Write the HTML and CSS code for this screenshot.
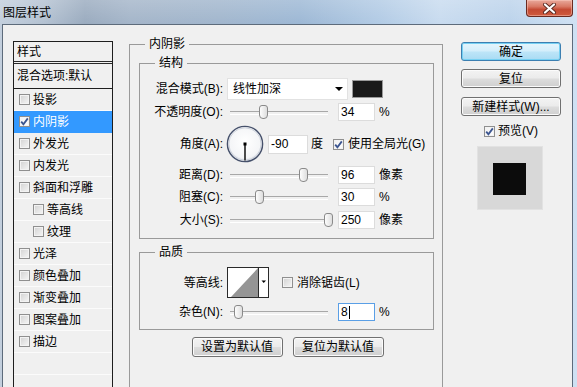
FILE: index.html
```html
<!DOCTYPE html>
<html lang="zh">
<head>
  <meta charset="UTF-8" />
  <title>图层样式</title>
  <link rel="stylesheet" href="styles.css">
</head>
<body>
  <div class="window">
    <div class="titlebar">
      <span class="title">图层样式</span>
      <button class="close-btn">
        <svg width="15" height="11" viewBox="0 0 15 11">
          <path d="M3 1.5 L12 9.5 M12 1.5 L3 9.5" stroke="#5a2a22" stroke-width="4" stroke-linecap="round"/>
          <path d="M3 1.5 L12 9.5 M12 1.5 L3 9.5" stroke="#fff" stroke-width="2.2" stroke-linecap="round"/>
        </svg>
      </button>
    </div>

    <div class="dialog">
      <ul class="style-list">
        <li class="list-head">样式</li>
        <li class="list-blend">混合选项:默认</li>
        <li><span class="check"></span>投影</li>
        <li class="selected"><span class="check checked"><svg width="9" height="9" viewBox="0 0 9 9"><path d="M1.2 4.6 L3.4 7.2 L7.8 1.4" fill="none" stroke="#3b5590" stroke-width="1.8"/></svg></span>内阴影</li>
        <li><span class="check"></span>外发光</li>
        <li><span class="check"></span>内发光</li>
        <li><span class="check"></span>斜面和浮雕</li>
        <li class="sub"><span class="check"></span>等高线</li>
        <li class="sub"><span class="check"></span>纹理</li>
        <li><span class="check"></span>光泽</li>
        <li><span class="check"></span>颜色叠加</li>
        <li><span class="check"></span>渐变叠加</li>
        <li><span class="check"></span>图案叠加</li>
        <li><span class="check"></span>描边</li>
        <li></li>
      </ul>

      <fieldset class="group outer">
        <legend>内阴影</legend>
        <div class="outer-body">
          <fieldset class="group">
            <legend>结构</legend>
            <div class="group-body structure">
              <div class="row h22">
                <span class="lbl">混合模式(B):</span>
                <div class="select">线性加深<span class="arrow"></span></div>
                <div class="swatch"></div>
              </div>
              <div class="row h24">
                <span class="lbl">不透明度(O):</span>
                <div class="slider"><div class="track"><span class="thumb" style="left: 34%"></span></div></div>
                <div class="field">34</div>
                <span class="unit">%</span>
              </div>
              <div class="row h40">
                <span class="lbl">角度(A):</span>
                <svg class="dial" width="38" height="38" viewBox="0 0 38 38">
                  <defs>
                    <radialGradient id="dialFill" cx="50%" cy="45%" r="55%">
                      <stop offset="0" stop-color="#ffffff"/>
                      <stop offset="0.8" stop-color="#f4f5f7"/>
                      <stop offset="1" stop-color="#d9dce3"/>
                    </radialGradient>
                  </defs>
                  <circle cx="19" cy="19" r="17.6" fill="url(#dialFill)" stroke="#46516b" stroke-width="1.4"/>
                  <circle cx="19" cy="19" r="16.2" fill="none" stroke="#c4cad6" stroke-width="0.8"/>
                  <line x1="19" y1="19" x2="19" y2="35.5" stroke="#000" stroke-width="1.4"/>
                  <rect x="17.5" y="17.5" width="3" height="3" fill="#000"/>
                </svg>
                <div class="field angle">-90</div>
                <span class="unit deg">度</span>
                <span class="check checked global"><svg width="9" height="9" viewBox="0 0 9 9"><path d="M1.2 4.6 L3.4 7.2 L7.8 1.4" fill="none" stroke="#3b5590" stroke-width="1.8"/></svg></span>
                <span class="check-text">使用全局光(G)</span>
              </div>
              <div class="row h22">
                <span class="lbl">距离(D):</span>
                <div class="slider"><div class="track"><span class="thumb" style="left: 74%"></span></div></div>
                <div class="field">96</div>
                <span class="unit">像素</span>
              </div>
              <div class="row h22">
                <span class="lbl">阻塞(C):</span>
                <div class="slider"><div class="track"><span class="thumb" style="left: 30%"></span></div></div>
                <div class="field">30</div>
                <span class="unit">%</span>
              </div>
              <div class="row h24">
                <span class="lbl">大小(S):</span>
                <div class="slider"><div class="track"><span class="thumb" style="left: 100%"></span></div></div>
                <div class="field">250</div>
                <span class="unit">像素</span>
              </div>
            </div>
          </fieldset>

          <fieldset class="group quality">
            <legend>品质</legend>
            <div class="group-body quality-body">
              <div class="row h31">
                <span class="lbl">等高线:</span>
                <svg class="contour" width="42" height="31" viewBox="0 0 42 31">
                  <rect x="0.5" y="0.5" width="41" height="30" fill="#fff" stroke="#2a2a2a"/>
                  <polygon points="4,30 31,1 31,30" fill="#959595"/>
                  <line x1="31.5" y1="0" x2="31.5" y2="31" stroke="#2a2a2a"/>
                  <polygon points="34.5,13.5 39,13.5 36.75,16" fill="#000"/>
                </svg>
                <span class="check antialias"></span>
                <span class="check-text">消除锯齿(L)</span>
              </div>
              <div class="row h22 noise">
                <span class="lbl">杂色(N):</span>
                <div class="slider"><div class="track"><span class="thumb" style="left: 8%"></span></div></div>
                <div class="field focused">8<span class="caret"></span></div>
                <span class="unit">%</span>
              </div>
            </div>
          </fieldset>

          <div class="default-buttons">
            <button class="btn wide">设置为默认值</button>
            <button class="btn wide">复位为默认值</button>
          </div>
        </div>
      </fieldset>

      <div class="side">
        <button class="btn primary">确定</button>
        <button class="btn">复位</button>
        <button class="btn">新建样式(W)...</button>
        <div class="preview-toggle">
          <span class="check checked"><svg width="9" height="9" viewBox="0 0 9 9"><path d="M1.2 4.6 L3.4 7.2 L7.8 1.4" fill="none" stroke="#3b5590" stroke-width="1.8"/></svg></span>
          <span>预览(V)</span>
        </div>
        <div class="preview-box">
          <div class="preview-square"></div>
        </div>
      </div>
    </div>
  </div>
</body>
</html>
```

FILE: styles.css
```css
* {
  box-sizing: border-box;
}

body {
  margin: 0;
  font-family: "Liberation Sans", "Noto Sans CJK SC", sans-serif;
  font-size: 12px;
  line-height: 16px;
  color: #000;
}

.window {
  width: 577px;
  height: 387px;
  overflow: hidden;
  background:
    linear-gradient(180deg, rgba(255,255,255,0.18), rgba(255,255,255,0) 24px),
    linear-gradient(90deg, #c3cfdd 0px, #b3c1d1 45px, #9aabbf 85px, #a4b5c9 130px, #a1b6cd 220px, #9db8d5 300px, #b2cbe5 380px, #c8dbef 440px, #bcd3eb 510px, #cfe1f3 577px);
}

/* 標題列 */
.titlebar {
  height: 24px;
  display: flex;
  align-items: flex-start;
}

.title {
  padding: 5px 0 0 3px;
  font-size: 12px;
}

.close-btn {
  margin-left: auto;
  margin-right: 4px;
  width: 47px;
  height: 17px;
  padding: 0;
  border: 1px solid #6a2a20;
  border-top: none;
  border-radius: 0 0 4px 4px;
  background: linear-gradient(180deg, #e9a99b 0%, #d97a66 40%, #c44a33 60%, #cf5b3e 100%);
  box-shadow: inset 0 0 0 1px rgba(255,210,200,0.45);
  display: flex;
  align-items: center;
  justify-content: center;
}

/* 對話框 */
.dialog {
  margin-left: 2px;
  width: 571px;
  height: 380px;
  border: 1px solid #5d6b7b;
  border-bottom: none;
  background: #f0f0f0;
  display: flex;
  align-items: flex-start;
  overflow: hidden;
}

.style-list {
  list-style: none;
  margin: 16px 0 0 10px;
  padding: 0;
  width: 100px;
  height: 360px;
  border: 1px solid #1e1e1e;
  border-bottom: none;
}

.style-list li {
  height: 22px;
  border-bottom: 1px solid #fbfbfb;
  display: flex;
  align-items: center;
  padding-left: 5px;
}

.style-list .list-head {
  height: 22px;
  padding-left: 3px;
  border-bottom: 3px double #2a2a2a;
}

.style-list .list-blend {
  height: 25px;
  padding-left: 3px;
  border-bottom: 1px solid #1e1e1e;
}

.style-list .check {
  margin-right: 3px;
}

.style-list .sub {
  padding-left: 19px;
}

.style-list .selected {
  background: #3399ff;
  color: #fff;
  border-bottom-color: #3399ff;
}

.check {
  flex: none;
  width: 11px;
  height: 11px;
  border: 1px solid #8f8f8f;
  background: linear-gradient(135deg, #d2d2d2, #f6f6f6);
  box-shadow: inset 0 0 0 1px #f3f3f3;
  display: inline-flex;
  align-items: center;
  justify-content: center;
}

.check.checked {
  background: linear-gradient(135deg, #f0f0f0, #ffffff);
}

/* 群組框 */
.group {
  margin: 0;
  padding: 0;
  min-inline-size: 0;
  border: 1px solid #9a9a9a;
}

.group legend {
  margin-left: 14px;
  padding: 0 3px;
  font-size: 12px;
  line-height: 16px;
}

.outer {
  margin: 11px 0 0 16px;
  width: 314px;
  height: 400px;
}

.outer legend {
  margin-left: 15px;
  padding: 0 4px;
}

.outer-body {
  padding: 3px 8px 0 9px;
}

.group-body {
  display: flex;
  flex-direction: column;
}

.structure {
  padding: 7px 0 6px;
}

.quality {
  margin-top: 5px;
}

.quality-body {
  padding: 7px 0 6px;
}

.quality-body .noise {
  margin-top: 3px;
}

.row {
  display: flex;
  align-items: center;
}

.h22 { height: 22px; }
.h24 { height: 24px; }
.h31 { height: 31px; }
.h40 { height: 40px; }

.lbl {
  width: 83px;
  text-align: right;
  flex: none;
  white-space: nowrap;
}

.select {
  margin-left: 4px;
  width: 121px;
  height: 22px;
  background: #fff;
  border: 1px solid #e2e2e2;
  padding-left: 5px;
  display: flex;
  align-items: center;
}

.arrow {
  margin-left: auto;
  margin-right: 4px;
  width: 0;
  height: 0;
  border-left: 4px solid transparent;
  border-right: 4px solid transparent;
  border-top: 4px solid #000;
}

.swatch {
  margin-left: 4px;
  width: 31px;
  height: 18px;
  background: #1a1a1a;
  border: 1px solid #9a9a9a;
}

.slider {
  margin-left: 4px;
  width: 104px;
  padding: 0 3px;
  flex: none;
}

.track {
  position: relative;
  height: 14px;
}

.track::before {
  content: "";
  position: absolute;
  left: 0;
  right: 0;
  top: 6px;
  height: 2px;
  border-top: 1px solid #a8a8a8;
  border-bottom: 1px solid #ffffff;
}

.thumb {
  position: absolute;
  top: 0;
  width: 9px;
  height: 14px;
  margin-left: -4px;
  border: 1px solid #8a8a8a;
  border-radius: 3px 3px 4px 4px;
  background: linear-gradient(90deg, #fdfdfd, #dedede);
}

.field {
  margin-left: 7px;
  width: 37px;
  height: 18px;
  background: #fff;
  border: 1px solid #dcdcdc;
  padding-left: 2px;
  display: flex;
  align-items: center;
}

.field.focused {
  border-color: #5a9fe6;
}

.caret {
  width: 1px;
  height: 13px;
  background: #000;
  margin-left: 1px;
}

.field.angle {
  margin-left: 4px;
  width: 40px;
  height: 19px;
}

.unit {
  margin-left: 4px;
}

.unit.deg {
  margin-left: 3px;
}

.dial {
  margin-left: 3px;
  flex: none;
}

.global {
  margin-left: 10px;
}

.check-text {
  margin-left: 4px;
}

.contour {
  margin-left: 4px;
  flex: none;
}

.antialias {
  margin-left: 13px;
}

.default-buttons {
  margin-top: 7px;
  display: flex;
  justify-content: center;
  gap: 10px;
  padding-left: 2px;
}

/* 按鈕 */
.btn {
  height: 19px;
  padding: 0;
  font-family: inherit;
  font-size: 12px;
  line-height: 16px;
  color: #000;
  border: 1px solid #707070;
  border-radius: 3px;
  background: linear-gradient(180deg, #f3f3f3 0%, #ebebeb 48%, #dddddd 52%, #cfcfcf 100%);
  box-shadow: inset 0 0 0 1px #fbfbfb;
}

.btn.wide {
  width: 91px;
  height: 20px;
}

.btn.primary {
  border-color: #3c7fb1;
  background: linear-gradient(180deg, #e6f5fc 0%, #d3eefb 48%, #bde5f8 52%, #a9dbf3 100%);
  box-shadow: inset 0 0 0 1px #76d0f2;
}

.side {
  margin: 17px 0 0 18px;
  width: 100px;
  display: flex;
  flex-direction: column;
}

.side .btn {
  width: 100px;
  margin-bottom: 8px;
}

.side .btn:nth-child(2) {
  margin-bottom: 9px;
}

.side .btn:nth-child(3) {
  margin-bottom: 0;
}

.preview-toggle {
  margin-top: 6px;
  height: 18px;
  display: flex;
  align-items: center;
  justify-content: center;
  gap: 3px;
}

.preview-box {
  margin: 6px 0 0 16px;
  width: 66px;
  height: 64px;
  background: #d8d8d8;
  border: 1px solid #e2e2e2;
  padding: 16px 0 0 15px;
}

.preview-square {
  width: 33px;
  height: 32px;
  background: #0c0c0c;
}
```
